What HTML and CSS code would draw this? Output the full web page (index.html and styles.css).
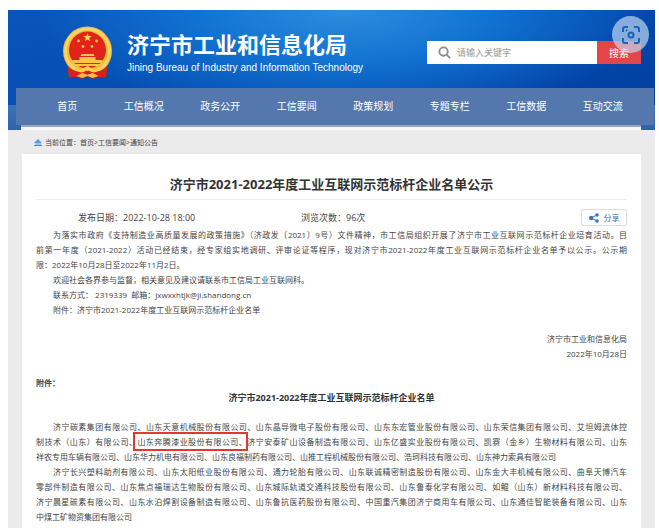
FILE: index.html
```html
<!DOCTYPE html>
<html lang="zh-CN">
<head>
  <meta charset="UTF-8" />
  <meta name="viewport" content="width=device-width, initial-scale=1.0"/>
  <title>济宁市工业和信息化局</title>
  <link rel="stylesheet" href="styles.css">
</head>
<body>
  <div class="page">
    <header class="banner">
      <div class="banner-top">
        <svg class="emblem" viewBox="0 0 50 54" aria-hidden="true">
          <path d="M8 37 L6 51 L15 51 L19 53 L25 50 L31 53 L35 51 L44 51 L42 37 Z" fill="#d8201c"/>
          <circle cx="25" cy="25" r="24.5" fill="#f2b93b"/>
          <circle cx="25" cy="25" r="22" fill="none" stroke="#f9d264" stroke-width="3"/>
          <circle cx="25" cy="24" r="18.5" fill="#e2231a"/>
          <path d="M25 7l1.1 3.1h3.3l-2.7 2 1 3.2-2.7-1.9-2.7 1.9 1-3.2-2.7-2h3.3z" fill="#fbd24e"/>
          <g fill="#f8c545">
            <circle cx="16" cy="15" r="1.4"/><circle cx="34" cy="15" r="1.4"/>
            <circle cx="20.5" cy="20.5" r="1.4"/><circle cx="29.5" cy="20.5" r="1.4"/>
            <path d="M19 28h12l1 2H18zM17 31h16v3H17zM10 34h30v3H10zM9 38h32l-2 2H11z"/>
          </g>
          <path d="M5 40q10 9 15 3l5 2 5-2q5 6 15-3l-1 8q-8 3-14-1l-5 2-5-2q-6 4-14 1z" fill="#d8201c"/>
          <path d="M12 41q5 5 9 1l4-2 4 2q4 4 9-1-3 7-9 5l-4-2-4 2q-6 2-9-5z" fill="#fbd24e"/>
          <path d="M14 50q6-4 11-1q5-3 11 1l-6 2-5-2-5 2z" fill="#f5bd3c"/>
        </svg>
        <div class="site-name">
          <h1>济宁市工业和信息化局</h1>
          <p>Jining Bureau of Industry and Information Technology</p>
        </div>
        <form class="search">
          <label class="search-box">
            <svg viewBox="0 0 14 14" aria-hidden="true">
              <circle cx="6" cy="6" r="4.5"/>
              <path d="M9.5 9.5L13 13"/>
            </svg>
            <input type="text" placeholder="请输入关键字" aria-label="请输入关键字">
          </label>
          <button type="submit">搜索</button>
        </form>
      </div>
      <nav class="main-nav">
        <a href="#">首页</a>
        <a href="#">工信概况</a>
        <a href="#">政务公开</a>
        <a href="#">工信要闻</a>
        <a href="#">政策规划</a>
        <a href="#">专题专栏</a>
        <a href="#">工信数据</a>
        <a href="#">互动交流</a>
      </nav>
      <div class="nav-edge"></div>
      <button class="capture" type="button" aria-label="截图搜索">
        <svg viewBox="0 0 20 20" aria-hidden="true">
          <path d="M2 7V4q0-2 2-2h3M13 2h3q2 0 2 2v3M18 13v3q0 2-2 2h-3M7 18H4q-2 0-2-2v-3"/>
          <circle cx="10" cy="10" r="2.5"/>
          <circle class="dot" cx="5.5" cy="5.5" r="1"/>
        </svg>
      </button>
    </header>

    <div class="crumbs">
      <svg viewBox="0 0 8 7" aria-hidden="true">
        <path d="M4 0L8 4H0z" fill="#5b9bd8"/>
        <path d="M1 4h6v2H1z" fill="#9cc4e8"/>
        <path d="M0 6h8v1H0z" fill="#4a87c7"/>
      </svg>
      <span>当前位置：<a href="#">首页</a>&gt;<a href="#">工信要闻</a>&gt;<a href="#">通知公告</a></span>
    </div>

    <main class="article">
      <h2>济宁市2021-2022年度工业互联网示范标杆企业名单公示</h2>
      <div class="meta">
        <span>发布日期：2022-10-28 18:00</span>
        <span>浏览次数：96次</span>
        <button class="share" type="button">
          <svg viewBox="0 0 10 10" aria-hidden="true">
            <path d="M8 2L2 5l6 3" fill="none" stroke="#3c74b4"/>
            <circle cx="8" cy="2" r="1.8"/>
            <circle cx="2.2" cy="5" r="2.2"/>
            <circle cx="8" cy="8" r="1.8"/>
          </svg>
          分享
        </button>
      </div>

      <div class="text">
        <p>
          <span class="full indent">为落实市政府《支持制造业高质量发展的政策措施》（济政发〔2021〕9号）文件精神，市工信局组织开展了济宁市工业互联网示范标杆企业培育活动。目</span>
          <span class="full">前第一年度（2021-2022）活动已经结束，经专家组实地调研、评审论证等程序，现对济宁市2021-2022年度工业互联网示范标杆企业名单予以公示。公示期</span>
          限：2022年10月28日至2022年11月2日。
        </p>
        <p class="indent">欢迎社会各界参与监督，相关意见及建议请联系市工信局工业互联网科。</p>
        <p class="indent">联系方式： 2319339&nbsp; 邮箱：jxwxxhtjk@ji.shandong.cn</p>
        <p class="indent">附件：济宁市2021-2022年度工业互联网示范标杆企业名单</p>
      </div>

      <div class="text sign">
        <p>济宁市工业和信息化局</p>
        <p>2022年10月28日</p>
      </div>

      <div class="text">
        <p><b>附件：</b></p>
        <h3>济宁市2021-2022年度工业互联网示范标杆企业名单</h3>
      </div>

      <div class="text">
        <p>
          <span class="full indent">济宁碳素集团有限公司、山东天意机械股份有限公司、山东晶导微电子股份有限公司、山东东宏管业股份有限公司、山东荣信集团有限公司、艾坦姆流体控</span>
          <span class="full">制技术（山东）有限公司、<mark>山东奔腾漆业股份有限公司、</mark>济宁安泰矿山设备制造有限公司、山东亿盛实业股份有限公司、凯赛（金乡）生物材料有限公司、山东</span>
          祥农专用车辆有限公司、山东华力机电有限公司、山东良福制药有限公司、山推工程机械股份有限公司、浩珂科技有限公司、山东神力索具有限公司
        </p>
        <p>
          <span class="full indent">济宁长兴塑料助剂有限公司、山东太阳纸业股份有限公司、通力轮胎有限公司、山东联诚精密制造股份有限公司、山东金大丰机械有限公司、曲阜天博汽车</span>
          <span class="full">零部件制造有限公司、山东焦点福瑞达生物股份有限公司、山东城际轨道交通科技股份有限公司、山东鲁泰化学有限公司、如鲲（山东）新材料科技有限公司、</span>
          <span class="full">济宁晨星碳素有限公司、山东水泊焊割设备制造有限公司、山东鲁抗医药股份有限公司、中国重汽集团济宁商用车有限公司、山东通佳智能装备有限公司、山东</span>
          中煤工矿物资集团有限公司
        </p>
      </div>
    </main>
  </div>
</body>
</html>
```

FILE: styles.css
```css
* {
  box-sizing: border-box;
}

body {
  margin: 0;
  padding: 10px 4px 0 8px;
  background-color: #ffffff;
  color: #444444;
  font-family: "Open Sans", "Noto Sans CJK SC", sans-serif;
  font-size: 8px;
  line-height: 15px;
}

h1, h2, h3, p {
  margin: 0;
}

a {
  color: inherit;
  text-decoration: none;
}

button, input {
  font-family: inherit;
  border: 0;
  padding: 0;
}

.page {
  background-color: #ebebeb;
}

/* banner */

.banner {
  position: relative;
  background:
    linear-gradient(#3b74b8, #2f63a8) 0 100% / 100% 25px no-repeat,
    radial-gradient(ellipse at 52% 0, #2f8ddd 0, #1273d2 30%, rgba(8, 88, 192, 0) 65%),
    linear-gradient(165deg, #0a55bb, #0348ac 60%, #033c9c);
}

.banner-top {
  display: flex;
  align-items: flex-start;
  height: 78px;
  padding: 16px 14px 0 54px;
}

.emblem {
  width: 51px;
  height: 54px;
}

.site-name {
  margin-left: 14px;
  color: #ffffff;
  white-space: nowrap;
}

.site-name h1 {
  font-size: 22px;
  line-height: 36px;
  font-weight: bold;
}

.site-name p {
  font-family: "Liberation Sans", sans-serif;
  font-size: 10px;
  line-height: 12px;
}

.search {
  display: flex;
  width: 214px;
  height: 23px;
  margin: 15px 0 0 auto;
}

.search-box {
  display: flex;
  flex: 1;
  align-items: center;
  gap: 6px;
  padding-left: 11px;
  background-color: #ffffff;
}

.search-box svg {
  width: 13px;
  height: 13px;
  fill: none;
  stroke: #8c8c8c;
  stroke-width: 2;
}

.search-box input {
  flex: 1;
  min-width: 0;
  font-size: 9px;
  outline: none;
}

.search-box input::placeholder {
  color: #999999;
}

.search button {
  width: 44px;
  background-color: #e54549;
  color: #ffffff;
  font-size: 10px;
}

.capture {
  position: absolute;
  top: 6px;
  right: 6px;
  width: 37px;
  height: 37px;
  border-radius: 50%;
  background-color: rgba(190, 213, 242, 0.7);
}

.capture svg {
  display: block;
  width: 20px;
  height: 20px;
  margin: 0 auto;
  fill: none;
  stroke: #1c63b4;
  stroke-width: 2;
}

.capture .dot {
  fill: #1c63b4;
  stroke: none;
}

.main-nav {
  display: flex;
  margin: 0 1px 0 8px;
  padding: 0 13px;
  background-color: #5478ae;
}

.main-nav a {
  flex: 1;
  color: #ffffff;
  font-size: 10px;
  line-height: 37px;
  text-align: center;
}

.nav-edge {
  height: 5px;
  margin: 0 14px 0 13px;
  background-color: #f7f8fa;
  border-top: 2px solid #95a5c9;
}

/* breadcrumb */

.crumbs {
  display: flex;
  align-items: center;
  gap: 3px;
  height: 24px;
  padding-left: 26px;
  font-size: 7px;
}

.crumbs svg {
  width: 8px;
  height: 7px;
}

/* article */

.article {
  margin: 0 14px;
  padding: 15px 14px 6px;
  background-color: #ffffff;
}

.article h2 {
  border-bottom: 1px solid #eeeeee;
  color: #333333;
  font-size: 13px;
  line-height: 30px;
  text-align: center;
}

.meta {
  display: grid;
  grid-template-columns: 223px 1fr auto;
  align-items: center;
  height: 27px;
  padding: 8px 0 0 42px;
  font-size: 9px;
}

.share {
  display: flex;
  align-items: center;
  justify-content: center;
  gap: 5px;
  width: 46px;
  height: 17px;
  background-color: #ffffff;
  border: 1px solid #dddddd;
  border-radius: 2px;
  color: #3c74b4;
  font-size: 8px;
}

.share svg {
  width: 10px;
  height: 10px;
  fill: #3c74b4;
}

.text {
  margin-bottom: 14px;
}

.indent {
  text-indent: 17px;
}

.full {
  display: block;
  text-align: justify;
  text-align-last: justify;
  white-space: nowrap;
}

.text h3 {
  font-size: 9px;
  line-height: 15px;
  color: #333333;
  text-align: center;
}

.text:last-child {
  margin-bottom: 0;
}

.sign {
  text-align: right;
}

mark {
  position: relative;
  background: none;
  color: inherit;
}

mark::after {
  content: "";
  position: absolute;
  inset: -4px -1px -4px -4px;
  border: 2px solid #e0392e;
}
```
